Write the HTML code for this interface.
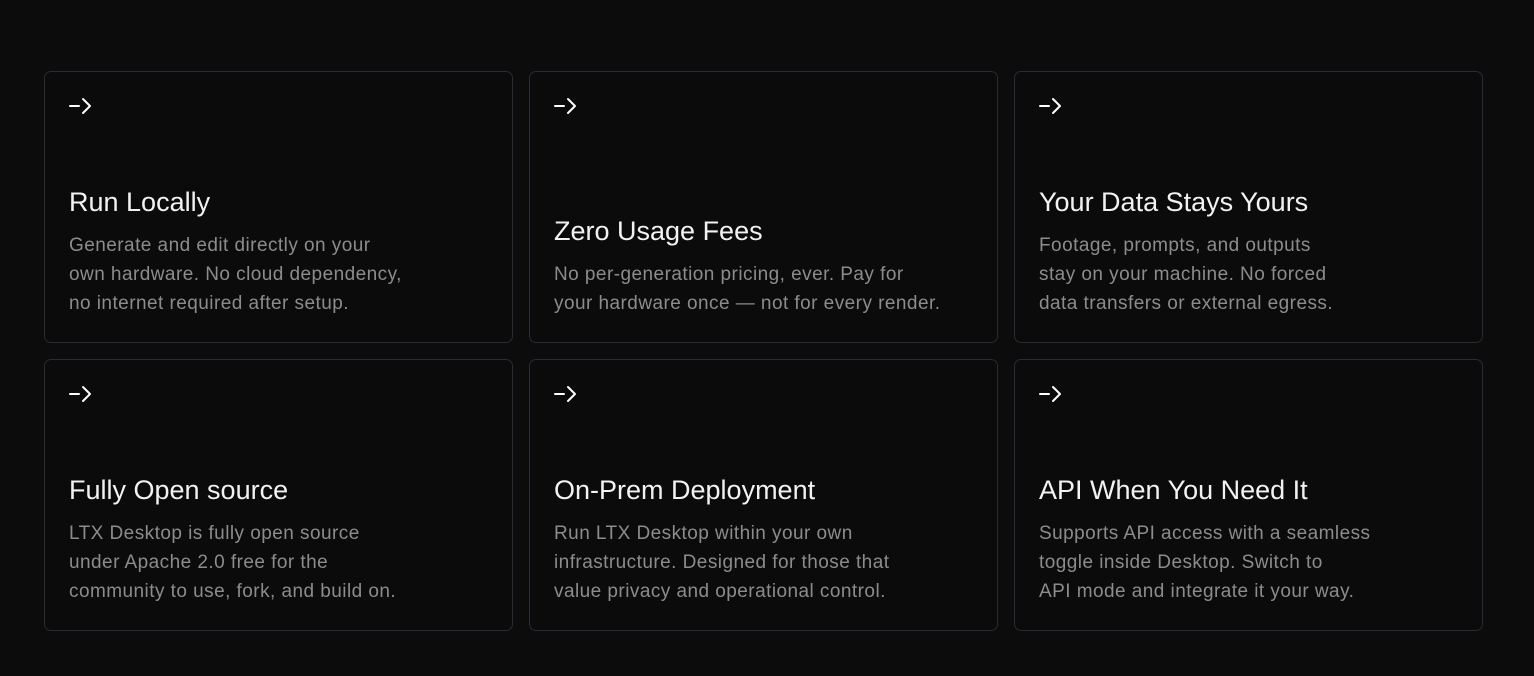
<!DOCTYPE html>
<html><head><style>
html,body{margin:0;background:#0c0c0d;width:1534px;height:676px;overflow:hidden;font-family:"Liberation Sans",sans-serif;}
.grid{position:absolute;left:44px;top:71px;display:grid;grid-template-columns:469px 469px 469px;grid-template-rows:272px 272px;column-gap:16px;row-gap:16px;}
.card{box-sizing:border-box;border:1px solid #2a2a38;border-radius:7px;background:#0b0b0c;padding:25px 24px 24px 24px;display:flex;flex-direction:column;justify-content:space-between;}
.ar{display:block;}
h3{margin:0 0 12px;color:#f2f2f2;font-weight:normal;font-size:27px;letter-spacing:0;line-height:34px;}
p{margin:0;color:#8c8c8c;font-size:19px;letter-spacing:0.45px;line-height:29px;}
</style></head><body>
<div class="grid">
<div class="card"><svg class="ar" width="24" height="18" viewBox="0 0 24 18"><path d="M1 9H10M14 2L21 9L14 16" stroke="#fff" stroke-width="2" fill="none" stroke-linecap="round" stroke-linejoin="round"/></svg><div><h3>Run Locally</h3><p>Generate and edit directly on your<br>own hardware. No cloud dependency,<br>no internet required after setup.</p></div></div>
<div class="card"><svg class="ar" width="24" height="18" viewBox="0 0 24 18"><path d="M1 9H10M14 2L21 9L14 16" stroke="#fff" stroke-width="2" fill="none" stroke-linecap="round" stroke-linejoin="round"/></svg><div><h3>Zero Usage Fees</h3><p>No per-generation pricing, ever. Pay for<br>your hardware once — not for every render.</p></div></div>
<div class="card"><svg class="ar" width="24" height="18" viewBox="0 0 24 18"><path d="M1 9H10M14 2L21 9L14 16" stroke="#fff" stroke-width="2" fill="none" stroke-linecap="round" stroke-linejoin="round"/></svg><div><h3>Your Data Stays Yours</h3><p>Footage, prompts, and outputs<br>stay on your machine. No forced<br>data transfers or external egress.</p></div></div>
<div class="card"><svg class="ar" width="24" height="18" viewBox="0 0 24 18"><path d="M1 9H10M14 2L21 9L14 16" stroke="#fff" stroke-width="2" fill="none" stroke-linecap="round" stroke-linejoin="round"/></svg><div><h3>Fully Open source</h3><p>LTX Desktop is fully open source<br>under Apache 2.0 free for the<br>community to use, fork, and build on.</p></div></div>
<div class="card"><svg class="ar" width="24" height="18" viewBox="0 0 24 18"><path d="M1 9H10M14 2L21 9L14 16" stroke="#fff" stroke-width="2" fill="none" stroke-linecap="round" stroke-linejoin="round"/></svg><div><h3>On-Prem Deployment</h3><p>Run LTX Desktop within your own<br>infrastructure. Designed for those that<br>value privacy and operational control.</p></div></div>
<div class="card"><svg class="ar" width="24" height="18" viewBox="0 0 24 18"><path d="M1 9H10M14 2L21 9L14 16" stroke="#fff" stroke-width="2" fill="none" stroke-linecap="round" stroke-linejoin="round"/></svg><div><h3>API When You Need It</h3><p>Supports API access with a seamless<br>toggle inside Desktop. Switch to<br>API mode and integrate it your way.</p></div></div>
</div>
</body></html>
